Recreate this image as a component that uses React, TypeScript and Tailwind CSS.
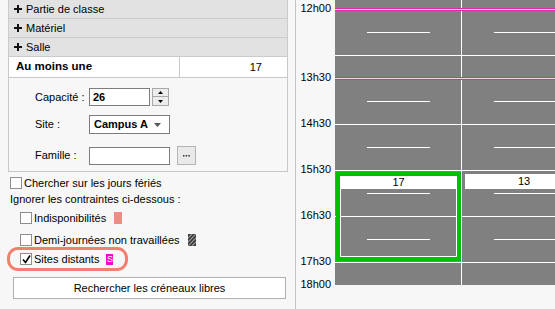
import React from "react";

// --- TYPES ---
type Seg = { kind: "gray"; h: number } | { kind: "magenta" } | { kind: "white" } | { kind: "short" };

type CheckProps = { checked?: boolean };

const sections = ["Partie de classe", "Matériel", "Salle"];

// half-hour rows of 23px, first slot cut at the top
const segs: Seg[] = [
  { kind: "gray", h: 8 },
  { kind: "magenta" },
  { kind: "gray", h: 21 },
  { kind: "short" },
  { kind: "gray", h: 22 },
  { kind: "white" },
  { kind: "gray", h: 21 },
  { kind: "magenta" },
  { kind: "gray", h: 21 },
  { kind: "short" },
  { kind: "gray", h: 22 },
  { kind: "white" },
  { kind: "gray", h: 22 },
  { kind: "short" },
  { kind: "gray", h: 22 },
  { kind: "white" },
  { kind: "gray", h: 22 },
  { kind: "short" },
  { kind: "gray", h: 22 },
  { kind: "white" },
  { kind: "gray", h: 22 },
  { kind: "short" },
  { kind: "gray", h: 22 },
  { kind: "white" },
  { kind: "gray", h: 22 },
];

const hours = [
  { label: "12h00", mt: "mt-[2px]" },
  { label: "13h30", mt: "mt-[56px]" },
  { label: "14h30", mt: "mt-[33px]" },
  { label: "15h30", mt: "mt-[33px]" },
  { label: "16h30", mt: "mt-[33px]" },
  { label: "17h30", mt: "mt-[33px]" },
  { label: "18h00", mt: "mt-[10px]" },
];

const Plus = () => (
  <svg width="8" height="8" viewBox="0 0 8 8" className="shrink-0">
    <rect x="3" y="0" width="2" height="8" fill="#111" />
    <rect x="0" y="3" width="8" height="2" fill="#111" />
  </svg>
);

const Check = ({ checked }: CheckProps) => (
  <span className="w-[12px] h-[12px] border border-[#8e8e8e] bg-white flex items-center justify-center shrink-0">
    {checked && (
      <svg width="9" height="9" viewBox="0 0 9 9">
        <path d="M1 4.5 L3.5 7.5 L8 0.5" stroke="#000" strokeWidth="1.6" fill="none" />
      </svg>
    )}
  </span>
);

const GridRow = ({ seg }: { seg: Seg }) => {
  if (seg.kind === "white") return <div className="h-px bg-white shrink-0" />;
  if (seg.kind === "magenta")
    return <div className="h-[3px] border-y border-[#d9309f] bg-[#f6d2e8] shrink-0" />;
  const h = seg.kind === "gray" ? seg.h : 1;
  return (
    <div className="flex gap-px bg-white shrink-0" style={{ height: h }}>
      {[0, 1].map((i) => (
        <div key={i} className="w-[126px] shrink-0 bg-[#808080] flex justify-center">
          {seg.kind === "short" && <div className="w-[63px] h-px bg-white" />}
        </div>
      ))}
    </div>
  );
};

const LeftPanel = () => (
  <div className="w-[296px] shrink-0 border-r border-[#c4c4c4] pl-[8px] pr-[7px] flex flex-col">
    {sections.map((s) => (
      <div
        key={s}
        className="h-[19px] shrink-0 flex items-center gap-[4px] bg-[#e2e2e2] border-x border-b border-[#cbcbcb] pl-[5px]"
      >
        <Plus />
        <span>{s}</span>
      </div>
    ))}
    <div className="h-[21px] shrink-0 flex bg-white border-x border-b border-[#c8c8c8]">
      <div className="w-[171px] border-r border-[#c8c8c8] flex items-center pl-[7px] font-bold text-[11.5px]">
        Au moins une
      </div>
      <div className="flex-1 flex items-center justify-end pr-[25px]">17</div>
    </div>

    <div className="h-[94px] shrink-0 border-x border-b border-[#c8c8c8] pl-[26px] pt-[10px] flex flex-col">
      <div className="flex items-center h-[18px]">
        <span className="w-[54px]">Capacité :</span>
        <div className="w-[61px] h-[18px] border border-[#7c7c7c] bg-white flex items-center pl-[3px] font-bold">
          26
        </div>
        <div className="ml-[2px] w-[17px] h-[18px] flex flex-col">
          <div className="h-[9px] border border-[#a8a8a8] bg-[#ececec] flex items-center justify-center">
            <svg width="5" height="3" viewBox="0 0 5 3">
              <path d="M2.5 0 L5 3 L0 3 Z" fill="#000" />
            </svg>
          </div>
          <div className="h-[9px] border border-t-0 border-[#a8a8a8] bg-[#ececec] flex items-center justify-center">
            <svg width="5" height="3" viewBox="0 0 5 3">
              <path d="M0 0 L5 0 L2.5 3 Z" fill="#000" />
            </svg>
          </div>
        </div>
      </div>
      <div className="flex items-center h-[19px] mt-[9px]">
        <span className="w-[54px]">Site :</span>
        <div className="w-[81px] h-[19px] border border-[#7c7c7c] bg-white flex items-center pl-[4px] font-bold gap-[6px]">
          <span>Campus A</span>
          <svg width="7" height="4" viewBox="0 0 7 4">
            <path d="M0 0 L7 0 L3.5 4 Z" fill="#555" />
          </svg>
        </div>
      </div>
      <div className="flex items-center h-[19px] mt-[12px]">
        <span className="w-[54px]">Famille :</span>
        <div className="w-[81px] h-[18px] border border-[#7c7c7c] bg-white" />
        <div className="ml-[7px] w-[19px] h-[19px] border border-[#b4b4b4] bg-[#e9e9e9] flex items-center justify-center">
          <svg width="7" height="2" viewBox="0 0 7 2">
            <rect x="0" y="0" width="1.5" height="1.5" fill="#333" />
            <rect x="2.7" y="0" width="1.5" height="1.5" fill="#333" />
            <rect x="5.4" y="0" width="1.5" height="1.5" fill="#333" />
          </svg>
        </div>
      </div>
    </div>

    <div className="mt-[5px] h-[12px] flex items-center gap-[2px] pl-[2px]">
      <Check />
      <span>Chercher sur les jours fériés</span>
    </div>
    <div className="mt-[4px] h-[12px] flex items-center pl-[2px]">Ignorer les contraintes ci-dessous :</div>
    <div className="mt-[7px] h-[12px] flex items-center gap-[2px] pl-[12px]">
      <Check />
      <span>Indisponibilités</span>
      <span className="ml-[6px] w-[8px] h-[12px] bg-[#f28a85]" />
    </div>
    <div className="mt-[10px] h-[12px] flex items-center gap-[2px] pl-[12px]">
      <Check />
      <span>Demi-journées non travaillées</span>
      <svg width="8" height="12" viewBox="0 0 8 12" className="ml-[6px]">
        <rect width="8" height="12" fill="#3a3a3a" />
        <path d="M0 4 L4 0 M0 8 L8 0 M0 12 L8 4 M4 12 L8 8" stroke="#9a9a9a" strokeWidth="1.2" />
      </svg>
    </div>
    <div className="mt-[1px] ml-[-1px] w-[121px] h-[24px] border-[3px] border-[#f0806f] rounded-[11px] flex items-center gap-[2px] pl-[10px]">
      <Check checked />
      <span>Sites distants</span>
      <span className="ml-[5px] w-[7px] h-[11px] bg-[#ff00cc] text-white text-[9px] leading-none flex items-center justify-center">
        S
      </span>
    </div>
    <button className="mt-[6px] ml-[5px] w-[273px] h-[22px] border border-[#b0b0b0] bg-white flex items-center justify-center">
      Rechercher les créneaux libres
    </button>
  </div>
);

const Planning = () => (
  <div className="flex-1 flex">
    <div className="w-[39px] shrink-0 flex flex-col items-end pr-[4px]">
      {hours.map((h) => (
        <div key={h.label} className={`${h.mt} h-[13px] leading-[13px]`}>
          {h.label}
        </div>
      ))}
    </div>
    <div className="relative w-[220px] overflow-hidden">
      <div className="flex flex-col">
        {segs.map((s, i) => (
          <GridRow key={i} seg={s} />
        ))}
      </div>
      <div className="absolute left-[1px] top-[172px] w-[125px] h-[89px] border-4 border-[#00c000]">
        <div className="h-full border border-white border-t-0">
          <div className="h-[13px] bg-white flex items-center justify-center leading-none">17</div>
        </div>
      </div>
      <div className="absolute left-[130px] top-[174px] w-[120px] h-[15px] bg-white pl-[1px]">
        <div className="w-[116px] h-full flex items-center justify-center leading-none">13</div>
      </div>
    </div>
  </div>
);

export default function App() {
  return (
    <div className="w-[555px] h-[309px] flex overflow-hidden bg-[#f7f7f7] text-[11px] text-black font-['Liberation_Sans',Arial,sans-serif]">
      <LeftPanel />
      <Planning />
    </div>
  );
}
